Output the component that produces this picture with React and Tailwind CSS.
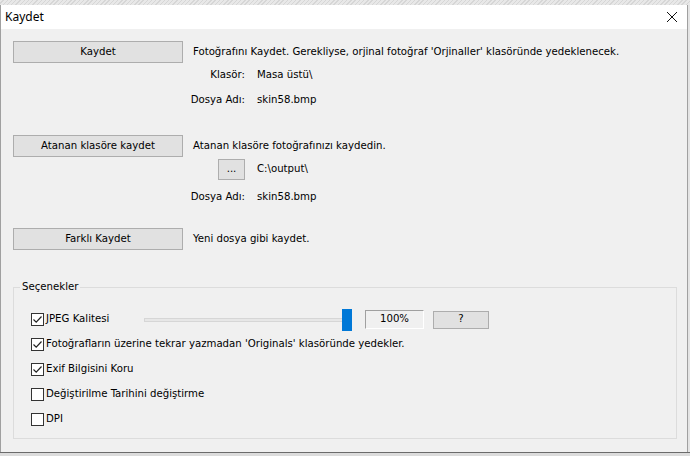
import React from 'react';

const font = { fontFamily: '"DejaVu Sans Condensed", "DejaVu Sans", sans-serif' };

const Check = ({ checked }) => (
  <span className="w-[13px] h-[13px] border border-[#333] bg-white flex items-center justify-center shrink-0">
    {checked && (
      <svg width="11" height="11" viewBox="0 0 11 11">
        <path d="M1.5 5.5 L4.2 8.2 L9.5 2.5" fill="none" stroke="#222" strokeWidth="1.2" />
      </svg>
    )}
  </span>
);

const WinButton = ({ children, className = '' }) => (
  <div className={`bg-[#e1e1e1] border border-[#adadad] flex items-center justify-center text-[11.3px] text-black ${className}`}>
    {children}
  </div>
);

const Option = ({ checked, label, labelClass = '', children }) => (
  <div className="h-[25px] flex items-center">
    <Check checked={checked} />
    <span className={`ml-[2px] text-[11.3px] ${labelClass}`}>{label}</span>
    {children}
  </div>
);

export default function App() {
  return (
    <div className="w-[690px] h-[456px] overflow-hidden bg-[#e4e4e4] flex flex-col text-black" style={font}>
      <div className="h-[5px] shrink-0 bg-[repeating-linear-gradient(135deg,#e8e8e8_0px,#e8e8e8_2px,#d6d6d6_2px,#d6d6d6_3px)]" />
      <div className="w-[688px] h-[447px] shrink-0 flex flex-col border-x border-[#a0a0a0] bg-[#f0f0f0]">
        {/* title bar */}
        <div className="h-[24px] bg-white flex items-center justify-between pl-[4px] pr-[9px]">
          <span className="text-[12px]" style={{ fontFamily: '"Noto Sans", "Liberation Sans", sans-serif' }}>Kaydet</span>
          <svg width="12" height="12" viewBox="0 0 12 12">
            <path d="M1 1 L11 11 M11 1 L1 11" stroke="#111" strokeWidth="1" />
          </svg>
        </div>

        <div className="flex-1 pt-[12px] pl-[12px] pr-[10px] flex flex-col text-[11.3px]">
          {/* Kaydet */}
          <div className="flex items-center gap-[10px] h-[22px]">
            <WinButton className="w-[170px] h-[22px]">Kaydet</WinButton>
            <span className="pt-[1px]">Fotoğrafını Kaydet. Gerekliyse, orjinal fotoğraf 'Orjinaller' klasöründe yedeklenecek.</span>
          </div>
          <div className="grid grid-cols-[232px_1fr] gap-x-[12px]">
            <div className="h-[25px] flex items-center justify-end">Klasör:</div>
            <div className="h-[25px] flex items-center">Masa üstü\</div>
            <div className="h-[25px] flex items-center justify-end">Dosya Adı:</div>
            <div className="h-[25px] flex items-center">skin58.bmp</div>
          </div>

          {/* Atanan klasöre */}
          <div className="flex items-center gap-[10px] h-[22px] mt-[22px]">
            <WinButton className="w-[170px] h-[22px]">Atanan klasöre kaydet</WinButton>
            <span className="pt-[1px]">Atanan klasöre fotoğrafınızı kaydedin.</span>
          </div>
          <div className="grid grid-cols-[232px_1fr] gap-x-[12px] mt-[2px]">
            <div className="h-[21px] flex items-center justify-end">
              <WinButton className="w-[27px] h-[21px]">...</WinButton>
            </div>
            <div className="h-[21px] flex items-center">C:\output\</div>
            <div className="h-[24px] mt-[5px] flex items-center justify-end">Dosya Adı:</div>
            <div className="h-[24px] mt-[5px] flex items-center">skin58.bmp</div>
          </div>

          {/* Farklı Kaydet */}
          <div className="flex items-center gap-[10px] h-[22px] mt-[19px]">
            <WinButton className="w-[170px] h-[22px]">Farklı Kaydet</WinButton>
            <span className="pt-[1px]">Yeni dosya gibi kaydet.</span>
          </div>

          {/* Seçenekler */}
          <div className="relative mt-[37px] h-[152px] border border-[#dcdcdc] pt-[19px] pl-[17px]">
            <span className="absolute -top-[9px] left-[6px] px-[2px] bg-[#f0f0f0] leading-[16px]">Seçenekler</span>
            <Option checked label="JPEG Kalitesi" labelClass="w-[98px]">
              <div className="w-[208px] h-[22px] relative flex items-center">
                <div className="w-full h-[4px] bg-[#e7e7e7] border border-[#d6d6d6]" />
                <div className="absolute right-0 top-0 w-[10px] h-[22px] bg-[#0078d7]" />
              </div>
              <div className="ml-[13px] w-[59px] h-[19px] border-t border-l border-t-[#a0a0a0] border-l-[#a0a0a0] border-b border-r border-b-white border-r-white flex items-center justify-center">
                100%
              </div>
              <WinButton className="ml-[9px] w-[56px] h-[18px]">?</WinButton>
            </Option>
            <Option checked label="Fotoğrafların üzerine tekrar yazmadan 'Originals' klasöründe yedekler." />
            <Option checked label="Exif Bilgisini Koru" />
            <Option label="Değiştirilme Tarihini değiştirme" />
            <Option label="DPI" />
          </div>
        </div>
      </div>
      <div className="h-[1px] bg-[#6b6b6b] w-[690px]" />
      <div className="flex-1 bg-[#dcdcdc]" />
    </div>
  );
}
